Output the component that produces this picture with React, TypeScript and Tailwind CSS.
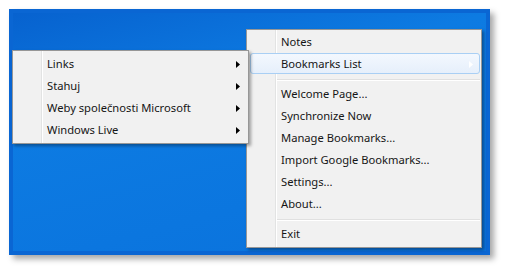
import React from "react";

const font = { fontFamily: '"Noto Sans", "Open Sans", sans-serif' };

function Arrow({ light }: { light?: boolean }) {
  return (
    <svg width="4" height="7" viewBox="0 0 4 7" className="block">
      <path d="M0 0 L4 3.5 L0 7 Z" fill={light ? "#ffffff" : "#000000"} />
    </svg>
  );
}

function Item({ label, sub, active }: { label: string; sub?: boolean; active?: boolean }) {
  return (
    <div className="relative h-[22px] flex items-center justify-between pl-[34px] pr-[8px]">
      {active && (
        <div className="absolute left-[3px] right-[1px] top-0 h-[21px] rounded-[3px] border border-[#a9cff4] bg-[linear-gradient(#f3f8fe,#e6effb)]" />
      )}
      <span className="relative text-[11.2px] text-[#151515] leading-none">{label}</span>
      {sub && (
        <span className="relative">
          <Arrow light={active} />
        </span>
      )}
    </div>
  );
}

function Sep() {
  return (
    <div className="h-[8px] pt-[4px] ml-[30px] mr-[1px]">
      <div className="h-px bg-[#e0e0e0]" />
      <div className="h-px bg-white" />
    </div>
  );
}

function Gutter() {
  return (
    <div className="absolute top-0 bottom-0 left-[28px] flex">
      <div className="w-px bg-[#e2e3e3]" />
      <div className="w-px bg-white" />
    </div>
  );
}

export default function App() {
  return (
    <div className="w-[506px] h-[269px] bg-white p-[9px]" style={font}>
      <div className="relative w-[481px] h-[246px] border-[4px] border-[#0a66d3] bg-[linear-gradient(165deg,#0762cf_0%,#0d7be2_35%,#0b76df_70%,#0a72dc_100%)] shadow-[4px_4px_6px_rgba(0,0,0,0.35)]">
        {/* Main menu */}
        <div className="absolute left-[233px] top-[16px] w-[236px] h-[219px] border border-[#979797] bg-[#f1f1f1] pt-px shadow-[2px_2px_3px_rgba(0,0,0,0.35)]">
          <Gutter />
          <Item label="Notes" />
          <Item label="Bookmarks List" sub active />
          <Sep />
          <Item label="Welcome Page..." />
          <Item label="Synchronize Now" />
          <Item label="Manage Bookmarks..." />
          <Item label="Import Google Bookmarks..." />
          <Item label="Settings..." />
          <Item label="About..." />
          <Sep />
          <Item label="Exit" />
        </div>
        {/* Sub menu */}
        <div className="absolute left-[-1px] top-[37px] w-[237px] h-[94px] border border-[#979797] bg-[#f1f1f1] pt-[2px] shadow-[2px_2px_3px_rgba(0,0,0,0.35)]">
          <Gutter />
          <Item label="Links" sub />
          <Item label="Stahuj" sub />
          <Item label="Weby společnosti Microsoft" sub />
          <Item label="Windows Live" sub />
        </div>
      </div>
    </div>
  );
}
